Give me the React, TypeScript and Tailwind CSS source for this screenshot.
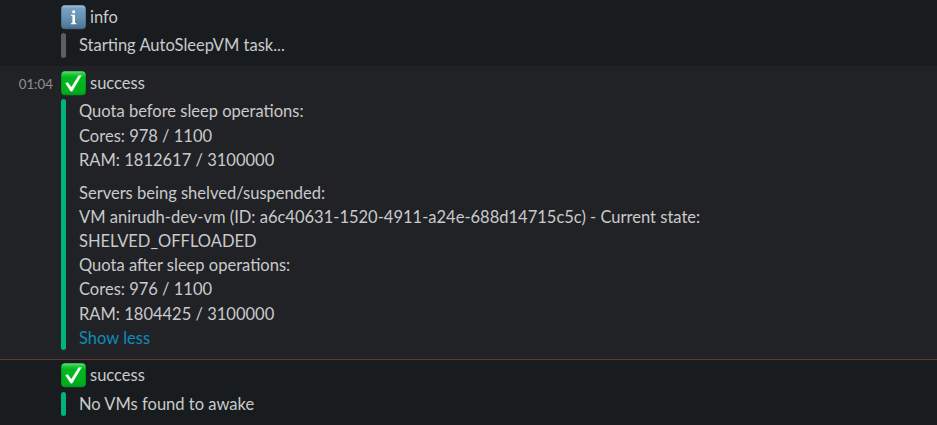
import React from "react";

function Check() {
  return (
    <svg viewBox="0 0 25 25" className="size-[25px] shrink-0">
      <defs>
        <linearGradient id="g" x1="0" y1="0" x2="0" y2="1">
          <stop offset="0" stopColor="#5fe070" />
          <stop offset="0.13" stopColor="#1fca3a" />
          <stop offset="0.25" stopColor="#00b91f" />
          <stop offset="0.88" stopColor="#00ad1d" />
          <stop offset="1" stopColor="#078f1c" />
        </linearGradient>
      </defs>
      <rect x="0.2" y="0.3" width="24.6" height="24" rx="4" fill="url(#g)" />
      <path d="M4.5 12.2L6.7 11.4L10.4 16.2L17.6 4.6L20.4 4.6L11.2 20.2L9.6 20.2Z" fill="#fff" stroke="#fff" strokeWidth="0.3" strokeLinejoin="round" />
    </svg>
  );
}

function Info() {
  return (
    <svg viewBox="0 0 25 25" className="size-[25px] shrink-0">
      <defs>
        <linearGradient id="b" x1="0" y1="0" x2="0" y2="1">
          <stop offset="0" stopColor="#a5c3dd" />
          <stop offset="0.14" stopColor="#779fc3" />
          <stop offset="0.5" stopColor="#6793b5" />
          <stop offset="0.9" stopColor="#517896" />
          <stop offset="1" stopColor="#3d5f7b" />
        </linearGradient>
      </defs>
      <rect x="0.2" y="0.3" width="24.6" height="24" rx="4" fill="url(#b)" />
      <circle cx="12.7" cy="6.8" r="1.6" fill="#fff" />
      <path d="M10 9.8H14V17.8L15.4 18.3V19.3H10V18.3L11.4 17.8V11.1L10 10.7Z" fill="#fff" />
    </svg>
  );
}

export default function App() {
  return (
    <main className="h-[425px] w-[937px] overflow-hidden bg-[#181c1f] font-['Lato',sans-serif] text-[16.52px] leading-[24.2px] text-[#c9cacb]">
      <section className="h-[66px] pl-[61px] pt-[5px]">
        <div className="flex h-[25px] items-center gap-1"><Info />info</div>
        <div className="mt-[3px] flex gap-[13px]">
          <div className="h-[25px] w-[5px] rounded-full bg-[#5e5e5e]" />
          <p>Starting AutoSleepVM task...</p>
        </div>
      </section>
      <section className="flex h-[294px] border-b border-[#6b3431] bg-[#212226] pt-[5px]">
        <time className="w-[61px] pl-[18.7px] text-[13.3px] leading-[26px] text-[#8f9093]">01:04</time>
        <div>
          <div className="flex h-[25px] items-center gap-1"><Check />success</div>
          <div className="mt-[3px] flex gap-[13px]">
            <div className="h-[251px] w-[5px] rounded-full bg-[#00b37d]" />
            <div className="pt-[0.4px]">
              <p>Quota before sleep operations:<br />Cores: 978 / 1100<br />RAM: 1812617 / 3100000</p>
              <p className="mt-[8.6px]">Servers being shelved/suspended:<br />VM anirudh-dev-vm (ID: a6c40631-1520-4911-a24e-688d14715c5c) - Current state:<br />SHELVED_OFFLOADED<br />Quota after sleep operations:<br />Cores: 976 / 1100<br />RAM: 1804425 / 3100000</p>
              <p className="text-[#0c8dbb]">Show less</p>
            </div>
          </div>
        </div>
      </section>
      <section className="pl-[61px] pt-[3px]">
        <div className="flex h-[25px] items-center gap-1"><Check />success</div>
        <div className="mt-[3px] flex gap-[13px]">
          <div className="mt-px h-[24px] w-[5px] rounded-full bg-[#00b37d]" />
          <p className="pt-px">No VMs found to awake</p>
        </div>
      </section>
    </main>
  );
}
